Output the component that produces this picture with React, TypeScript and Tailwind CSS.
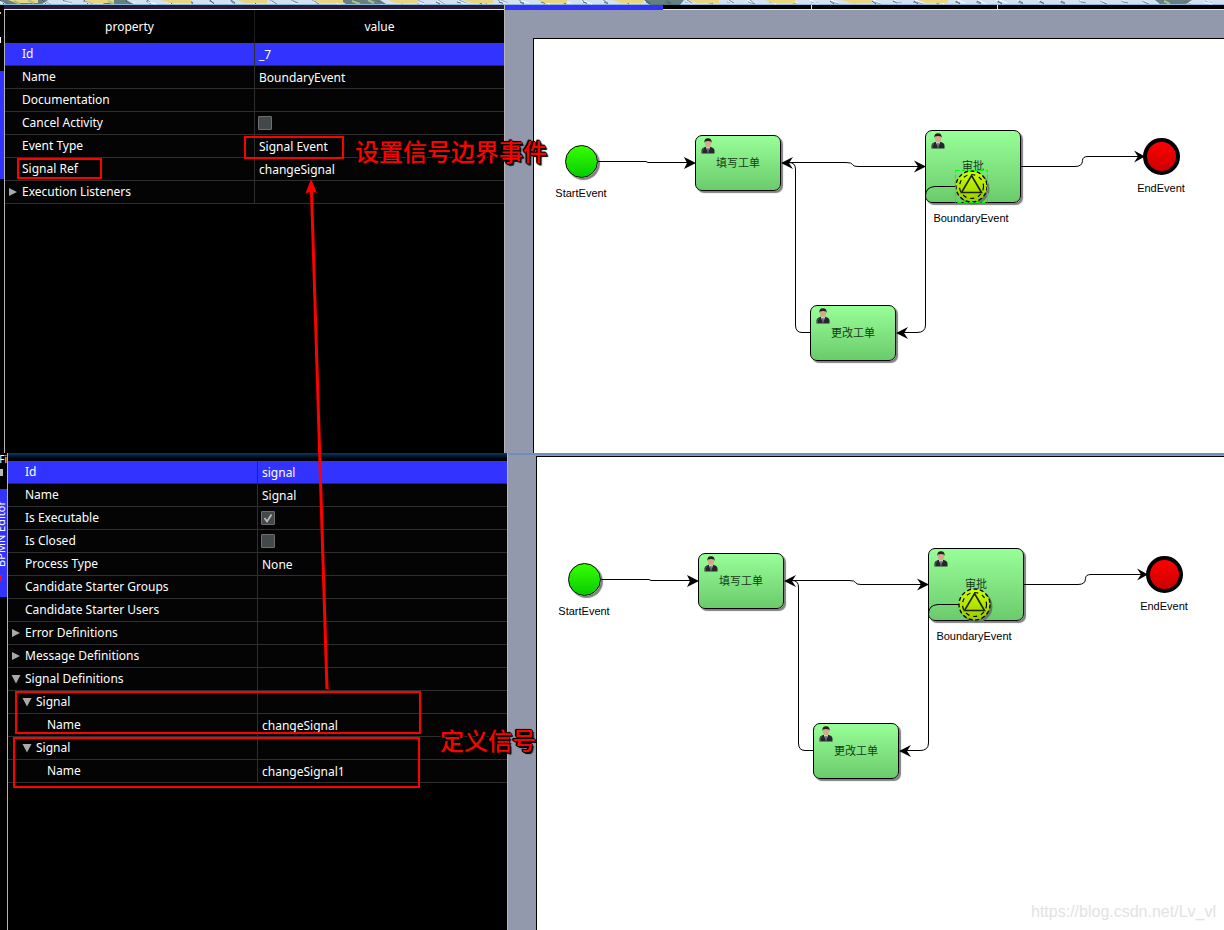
import { useId, type ReactNode } from "react";

type Row = {
  label: string;
  value?: string;
  check?: boolean;
  arrow?: "right" | "down";
  level?: 0 | 1 | 2;
  selected?: boolean;
};

const eventRows: Row[] = [
  { label: "Id", value: "_7", selected: true },
  { label: "Name", value: "BoundaryEvent" },
  { label: "Documentation" },
  { label: "Cancel Activity", check: false },
  { label: "Event Type", value: "Signal Event" },
  { label: "Signal Ref", value: "changeSignal" },
  { label: "Execution Listeners", arrow: "right" },
];

const processRows: Row[] = [
  { label: "Id", value: "signal", selected: true },
  { label: "Name", value: "Signal" },
  { label: "Is Executable", check: true },
  { label: "Is Closed", check: false },
  { label: "Process Type", value: "None" },
  { label: "Candidate Starter Groups" },
  { label: "Candidate Starter Users" },
  { label: "Error Definitions", arrow: "right" },
  { label: "Message Definitions", arrow: "right" },
  { label: "Signal Definitions", arrow: "down" },
  { label: "Signal", arrow: "down", level: 1 },
  { label: "Name", value: "changeSignal", level: 2 },
  { label: "Signal", arrow: "down", level: 1 },
  { label: "Name", value: "changeSignal1", level: 2 },
];

const indents = ["pl-[3px]", "pl-[14px]", "pl-[25px]"];

function Twisty({ dir }: { dir?: "right" | "down" }) {
  return (
    <svg viewBox="0 0 10 10" className="h-2.5 w-2.5 shrink-0" aria-hidden="true">
      {dir === "right" && <path d="M1 1L9 5L1 9Z" fill="#a9a9a9" />}
      {dir === "down" && <path d="M0.5 1H9.5L5 9.5Z" fill="#a9a9a9" />}
    </svg>
  );
}

function PropertyTable({ rows, header }: { rows: Row[]; header?: boolean }) {
  const base = useId();
  return (
    <table className="w-full table-fixed border-separate border-spacing-0 text-[12px] leading-[22px] text-white">
      <colgroup>
        <col className="w-[250px]" />
        <col />
      </colgroup>
      {header && (
        <thead>
          <tr className="h-[33px]">
            <th className="border-r border-[#1c1c1c] p-0 text-center font-normal">property</th>
            <th className="p-0 text-center font-normal">value</th>
          </tr>
        </thead>
      )}
      <tbody>
        {rows.map((row, i) => {
          const id = `${base}-${i}`;
          return (
            <tr key={id} className={row.selected ? "h-[23px] bg-[#3333ff]" : "h-[23px] bg-[#040404]"}>
              <td className="border-r border-b border-[#2e2e2e] p-0">
                <div className={`flex h-[22px] items-center gap-1 ${indents[row.level ?? 0]}`}>
                  <Twisty dir={row.arrow} />
                  {row.check === undefined ? <span>{row.label}</span> : <label htmlFor={id}>{row.label}</label>}
                </div>
              </td>
              <td className="border-b border-[#2e2e2e] p-0 pl-1">
                {row.check !== undefined ? (
                  <span className="relative flex h-[22px] items-center">
                    <input
                      id={id}
                      type="checkbox"
                      defaultChecked={row.check}
                      className="peer -ml-px h-3.5 w-3.5 appearance-none rounded-[1px] border border-[#6e6e6e] bg-[#43484a]"
                    />
                    <svg
                      viewBox="0 0 14 14"
                      className="pointer-events-none absolute -left-px hidden h-3.5 w-3.5 peer-checked:block"
                      aria-hidden="true"
                    >
                      <path d="M3.5 7L6 10.5L10.5 3.5" fill="none" stroke="#b8b8b8" strokeWidth="1.8" />
                    </svg>
                  </span>
                ) : (
                  <div className="h-[22px] pt-px">{row.value}</div>
                )}
              </td>
            </tr>
          );
        })}
      </tbody>
    </table>
  );
}

function UserIcon() {
  return (
    <svg viewBox="0 0 14 16" className="absolute top-0.5 left-[5px] h-4 w-3.5" aria-hidden="true">
      <path d="M0.5 15.5V12Q0.8 9.8 4 9L7 8.5L10 9Q13.2 9.8 13.5 12V15.5Z" fill="#26262c" />
      <path d="M4.8 8.5L7 15L9.2 8.5Z" fill="#e8e8ea" />
      <path d="M6.4 9.8H7.6L8 14L7 15.3L6 14Z" fill="#55555f" />
      <path d="M1.2 15V12.4Q1.8 11 3 10.6" fill="none" stroke="#77777f" strokeWidth="0.7" />
      <ellipse cx="7" cy="5.2" rx="3.1" ry="4" fill="#d3aa8b" />
      <path d="M3.4 5Q2.8 0.3 7 0.3Q11.2 0.3 10.6 5L9.9 3.4Q7 2.6 4.1 3.4Z" fill="#26221f" />
    </svg>
  );
}

function Task({ className, children }: { className: string; children: ReactNode }) {
  return (
    <div
      className={`absolute flex items-center justify-center rounded-[7px] border border-black bg-linear-to-b from-[#98ff98] to-[#6bcb6b] text-[11px] text-[#173a17] shadow-[2px_2px_1px_#808080] ${className}`}
    >
      <UserIcon />
      {children}
    </div>
  );
}

function NodeLabel({ className, children }: { className: string; children: ReactNode }) {
  return (
    <span
      className={`absolute -translate-x-1/2 font-['Liberation_Sans',Arial,sans-serif] text-[11px] leading-3 text-black ${className}`}
    >
      {children}
    </span>
  );
}

const arrowHeads = [
  "M162 124L150 118L153 124L150 130Z",
  "M247 124L259 118L255 124L259 130Z",
  "M392 127.500L380 121.500L384 127.500L380 133.500Z",
  "M362 294L374 288L370 294L374 300Z",
  "M611 117.500L600 111.500L604 117.500L600 123.500Z",
];

function Diagram({ selected }: { selected?: boolean }) {
  const fill = useId();
  return (
    <div className="relative h-[414px] w-[690px] font-['Liberation_Serif','Noto_Sans_CJK_SC',serif]">
      <span className="absolute top-[106px] left-[31px] h-[33px] w-[33px] rounded-full border border-black bg-linear-to-b from-[#33ff00] to-[#00cc00] shadow-[2px_2px_1px_#808080]" />
      <NodeLabel className="top-[148px] left-[47px]">StartEvent</NodeLabel>
      <Task className="top-24 left-[161px] h-14 w-[86px]">填写工单</Task>
      <Task className="top-[91px] left-[391px] h-[73px] w-24">审批</Task>
      <Task className="top-[266px] left-[276px] h-14 w-[86px]">更改工单</Task>
      <span className="absolute top-[99px] left-[609px] h-[37px] w-[37px] rounded-full border-4 border-black bg-linear-to-b from-[#ff0000] to-[#cc0000]" />
      <NodeLabel className="top-[143px] left-[627px]">EndEvent</NodeLabel>
      <svg viewBox="0 0 690 414" className="absolute inset-0 h-full w-full" aria-hidden="true">
        <defs>
          <linearGradient id={fill} x1="0" y1="0" x2="0" y2="1">
            <stop offset="0" stopColor="#ccff00" />
            <stop offset="1" stopColor="#99cc00" />
          </linearGradient>
        </defs>
        <g fill="none" stroke="#000" strokeWidth="1">
          <path d="M64 122.500H112L114 123.500H154" />
          <path d="M253 123.500H312Q318 123.500 318.500 125.500Q319 127.500 324 127.500H384" />
          <path d="M255 123.500Q261.500 123.500 261.500 130V286Q261.500 293.500 268 293.500H276" />
          <path d="M422 147.500H401Q391.500 148 391.500 157V286Q391.500 293.500 383 293.500H368" />
          <path d="M487 127.500H541Q548.500 127.500 548.500 121.500Q548.500 117.500 554 117.500H604" />
        </g>
        {arrowHeads.map((d) => (
          <path key={d} d={d} fill="#000" />
        ))}
        <circle cx="439.500" cy="149.500" r="16" fill="#5f7f5f" />
        <circle cx="437.500" cy="147.500" r="15.500" fill={`url(#${fill})`} stroke="#000" strokeWidth="1.300" strokeDasharray="4 2.500" />
        <circle cx="437.500" cy="147.500" r="12" fill="none" stroke="#000" strokeWidth="1.200" strokeDasharray="4 4" />
        <path d="M437.500 136.500L447.500 153.500H427.500Z" fill="none" stroke="#1c2400" strokeWidth="1.600" />
        {selected && (
          <rect x="421.500" y="131.500" width="32" height="32" fill="none" stroke="#00ff00" strokeWidth="1" strokeDasharray="4 2" />
        )}
      </svg>
      <NodeLabel className="top-[173px] left-[437px]">BoundaryEvent</NodeLabel>
    </div>
  );
}

const folders = [8, 84, 161, 237, 313, 388, 463, 537, 613, 689, 765, 842, 918];

function DesktopStrip() {
  return (
    <svg viewBox="0 0 1224 5" preserveAspectRatio="none" className="h-[5px] w-full shrink-0" aria-hidden="true">
      <rect width="1224" height="5" fill="#d3e2f2" />
      <rect y="4" width="1224" height="1" fill="#8fb8da" />
      {Array.from({ length: 190 }, (_, i) => {
        const x = (i * 83) % 1224;
        const tone = ["#4d5f86", "#7f8fa2", "#eef4fb", "#8fa6c4", "#ffffff"][i % 5];
        return <path key={i} d={`M${x} ${i % 3}L${x + 4 + (i % 5)} ${4 - (i % 2)}`} stroke={tone} strokeWidth="1" />;
      })}
      <path d="M0 0H48L42 4H6ZM100 0H126L134 4H104ZM340 0H380L386 4H346ZM644 0H684L680 5H650ZM1155 0H1192L1186 4H1160Z" fill="#3f5f5a" opacity="0.75" />
      {folders.map((x) => (
        <path key={x} d={`M${x} 0H${x + 30}V3H${x + 8}Z`} fill="#ead681" />
      ))}
      <path d="M14 1L20 4M28 0L34 3M108 1L114 4M352 1L360 4M368 0L374 3M1164 1L1170 4" stroke="#a9c08a" strokeWidth="2" />
    </svg>
  );
}

function Mark({ className }: { className: string }) {
  return <div className={`pointer-events-none absolute border-2 border-[#ff0000] ${className}`} />;
}

function Note({ className, children }: { className: string; children: ReactNode }) {
  return (
    <p
      className={`absolute text-2xl leading-8 font-medium whitespace-nowrap text-[#ff0000] [text-shadow:1px_0_#000,-1px_0_#000,0_1px_#000,0_-1px_#000,1px_1px_1px_#000,-1px_-1px_1px_#000,2px_2px_1px_#000] ${className}`}
    >
      {children}
    </p>
  );
}

export default function App() {
  return (
    <div className="relative flex min-h-screen flex-col overflow-hidden bg-black font-['Noto_Sans','Noto_Sans_CJK_SC',sans-serif]">
      <DesktopStrip />

      <section className="flex h-[448px] shrink-0">
        <div className="flex w-1 shrink-0 flex-col bg-black">
          <div className="mt-[7px] h-0.5 w-px bg-[#d8c860]" />
          <div className="mt-[23px] h-1.5 w-px bg-white" />
          <div className="mt-7 h-[108px] bg-[#3333ff]" />
        </div>
        <aside className="w-[501px] shrink-0 border-r border-[#b4b4b4] bg-black">
          <div className="h-1 bg-[#241c38]" />
          <div className="h-px bg-[#e4e4e4]" />
          <div className="h-[443px] border-l border-[#b4b4b4]">
            <PropertyTable rows={eventRows} header />
          </div>
        </aside>
        <main className="flex min-w-0 flex-1 flex-col bg-[#9299ad]">
          <div className="flex h-[5px] shrink-0">
            <div className="w-[158px] bg-[#3333ff]" />
            <div className="w-[149px] border-r border-b border-[#e4e4e4] bg-black" />
            <div className="w-[186px] border-r border-b border-[#e4e4e4] bg-black" />
            <div className="flex-1 border-b border-[#e4e4e4] bg-black" />
          </div>
          <div className="mt-7 ml-7 flex-1 overflow-hidden border-t border-l border-black bg-white">
            <Diagram selected />
          </div>
        </main>
      </section>

      <section className="flex flex-1">
        <div className="flex w-[7px] shrink-0 flex-col overflow-hidden bg-black">
          <div className="h-4 w-[7px] overflow-hidden">
            <span className="float-right text-[10px] leading-3 text-white">Fi</span>
          </div>
          <div className="h-[7px] w-[3px] bg-[#b9b9b9]" />
          <div className="mt-[13px] flex h-[108px] w-[7px] flex-col items-end overflow-hidden bg-[#3333ff] pt-3">
            <span className="rotate-180 text-[11px] leading-3 whitespace-nowrap text-white [writing-mode:vertical-rl]">
              BPMN Editor
            </span>
            <span className="mt-2 h-1.5 w-0.5 self-start bg-[#e8103a]" />
          </div>
        </div>
        <aside className="flex w-[501px] shrink-0 flex-col border-x border-[#b4b4b4] bg-black">
          <div className="h-2 shrink-0 bg-linear-to-b from-[#123a66] to-black" />
          <PropertyTable rows={processRows} />
        </aside>
        <main className="flex min-w-0 flex-1 flex-col border-t-2 border-[#6f8fb8] bg-[#9299ad]">
          <div className="mt-px ml-7 flex flex-1 flex-col justify-between overflow-hidden border-t border-l border-black bg-white">
            <Diagram />
            <p className="pr-2 pb-1.5 text-right font-['Liberation_Sans',Arial,sans-serif] text-[16px] leading-6 text-[#e2e2e2]">
              https://blog.csdn.net/Lv_vl
            </p>
          </div>
        </main>
      </section>

      <Mark className="top-[136px] left-[244px] h-[23px] w-[100px]" />
      <Mark className="top-[158px] left-[17px] h-[21px] w-[85px]" />
      <Mark className="top-[691px] left-[15px] h-[43px] w-[406px]" />
      <Mark className="top-[737px] left-[13px] h-[51px] w-[407px]" />
      <svg viewBox="0 0 30 512" className="pointer-events-none absolute top-[179px] left-[300px] h-[512px] w-[30px]" aria-hidden="true">
        <path d="M11.500 12L27 510" stroke="#ff0000" strokeWidth="3" />
        <path d="M11 0L17 14L11.500 12L5.500 14.500Z" fill="#ff0000" />
      </svg>
      <Note className="top-[136px] left-[355px]">设置信号边界事件</Note>
      <Note className="top-[725px] left-[440px]">定义信号</Note>
    </div>
  );
}
